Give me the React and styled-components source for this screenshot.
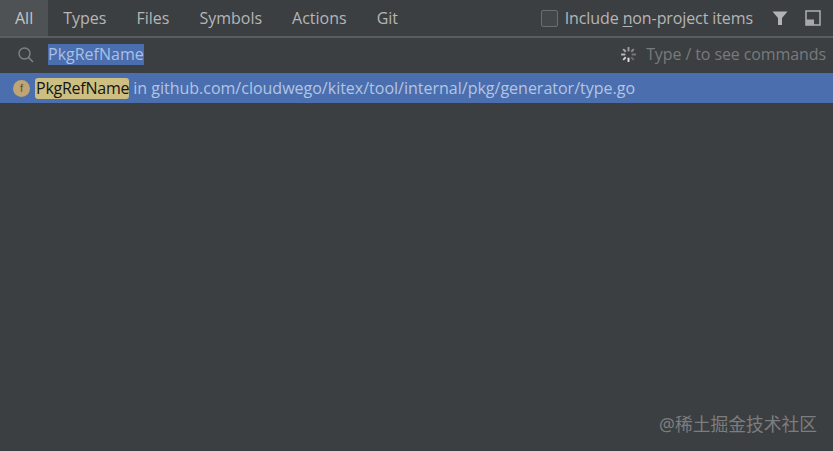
import React from "react";
import styled, { createGlobalStyle } from "styled-components";

const GlobalStyle = createGlobalStyle`
  html, body {
    margin: 0;
    padding: 0;
    background: #3c3f41;
  }
`;

const Container = styled.div`
  position: relative;
  width: 833px;
  height: 451px;
  overflow: hidden;
  background: #3c3f41;
  font-family: "Open Sans", "Noto Sans", sans-serif;
  font-size: 16px;
  color: #bbbbbb;
`;

const TabBar = styled.div`
  display: flex;
  align-items: stretch;
  height: 36px;
  border-bottom: 2px solid #5b5e5f;
`;

const Tab = styled.div`
  display: flex;
  align-items: center;
  padding: 0 15px;
  background: ${(props) => (props.$active ? "#4e5254" : "transparent")};
  color: ${(props) => (props.$active ? "#c4c6c7" : "#b4b6b7")};
`;

const TabOptions = styled.div`
  margin-left: auto;
  display: flex;
  align-items: center;
  padding-right: 12px;
`;

const CheckBox = styled.span`
  width: 15px;
  height: 15px;
  border: 1px solid #6b6e6f;
  border-radius: 2px;
  background: #43474a;
  margin-right: 7px;
`;

const OptionLabel = styled.span`
  color: #b4b6b7;
  margin-right: 19px;
  letter-spacing: -0.1px;
  u {
    text-underline-offset: 2px;
  }
`;

const SearchRow = styled.div`
  display: flex;
  align-items: center;
  height: 32px;
  padding: 0 7px 3px 17px;
`;

const SearchIcon = styled.svg`
  width: 17px;
  height: 17px;
  margin-right: 14px;
`;

const SearchText = styled.span`
  background: #4b6eaf;
  color: #a9c0e6;
  line-height: 21px;
`;

const Hint = styled.div`
  margin-left: auto;
  display: flex;
  align-items: center;
  gap: 9px;
  color: #787a7c;
  letter-spacing: -0.1px;
`;

const ResultRow = styled.div`
  display: flex;
  align-items: center;
  height: 30px;
  padding-left: 13px;
  background: #4b6eaf;
  color: #b3c5e2;
`;

const FuncBadge = styled.span`
  width: 17px;
  height: 17px;
  border-radius: 50%;
  background: #bda574;
  color: #5a4f3a;
  font-family: "Liberation Sans", sans-serif;
  font-size: 11px;
  line-height: 17px;
  text-align: center;
  margin-right: 5px;
`;

const Match = styled.span`
  background: #cdbf82;
  color: #141414;
  border-radius: 3px;
  line-height: 21px;
  padding: 0 0 0 1px;
  margin-right: 4px;
  letter-spacing: -0.25px;
`;

const Watermark = styled.div`
  position: absolute;
  right: 16px;
  bottom: 16px;
  font-family: "Noto Sans", "Noto Sans CJK SC", sans-serif;
  font-size: 17.75px;
  line-height: 22px;
  color: #7b7d7f;
`;

function Spinner() {
  const spokes = [
    ["8", "1", "8", "5", "#9c9e9f"],
    ["13", "3", "10.6", "5.4", "#8a8c8d"],
    ["15", "8", "11", "8", "#77797a"],
    ["13", "13", "10.6", "10.6", "#6a6c6d"],
    ["8", "15", "8", "11", "#e2e3e3"],
    ["3", "13", "5.4", "10.6", "#cfd0d0"],
    ["1", "8", "5", "8", "#b8b9ba"],
    ["3", "3", "5.4", "5.4", "#a8aaab"],
  ];
  return (
    <svg width="17" height="17" viewBox="0 0 16 16">
      {spokes.map(([x1, y1, x2, y2, color]) => (
        <line key={x1 + y1} x1={x1} y1={y1} x2={x2} y2={y2} stroke={color} strokeWidth="1.8" />
      ))}
    </svg>
  );
}

function App() {
  return (
    <Container>
      <GlobalStyle />
      <TabBar>
        <Tab $active>All</Tab>
        <Tab>Types</Tab>
        <Tab>Files</Tab>
        <Tab>Symbols</Tab>
        <Tab>Actions</Tab>
        <Tab>Git</Tab>
        <TabOptions>
          <CheckBox />
          <OptionLabel>
            Include <u>n</u>on-project items
          </OptionLabel>
          <svg width="16" height="16" viewBox="0 0 16 16" style={{ marginRight: 17 }}>
            <path d="M0.5 1.5 H15.5 L10 8 V15 H6 V8 Z" fill="#b1b3b4" />
          </svg>
          <svg width="16" height="16" viewBox="0 0 16 16">
            <rect x="1" y="1" width="14" height="14" fill="none" stroke="#a7a9aa" strokeWidth="1.6" />
            <rect x="1" y="9.5" width="8" height="5.5" fill="#a7a9aa" />
          </svg>
        </TabOptions>
      </TabBar>
      <SearchRow>
        <SearchIcon viewBox="0 0 17 17">
          <circle cx="7.5" cy="7.5" r="5.5" fill="none" stroke="#7f8284" strokeWidth="1.4" />
          <line x1="11.5" y1="11.5" x2="16" y2="16" stroke="#7f8284" strokeWidth="1.6" />
        </SearchIcon>
        <SearchText>PkgRefName</SearchText>
        <Hint>
          <Spinner />
          Type / to see commands
        </Hint>
      </SearchRow>
      <ResultRow>
        <FuncBadge>f</FuncBadge>
        <Match>PkgRefName</Match>
        in github.com/cloudwego/kitex/tool/internal/pkg/generator/type.go
      </ResultRow>
      <Watermark>@稀土掘金技术社区</Watermark>
    </Container>
  );
}

export default App;
